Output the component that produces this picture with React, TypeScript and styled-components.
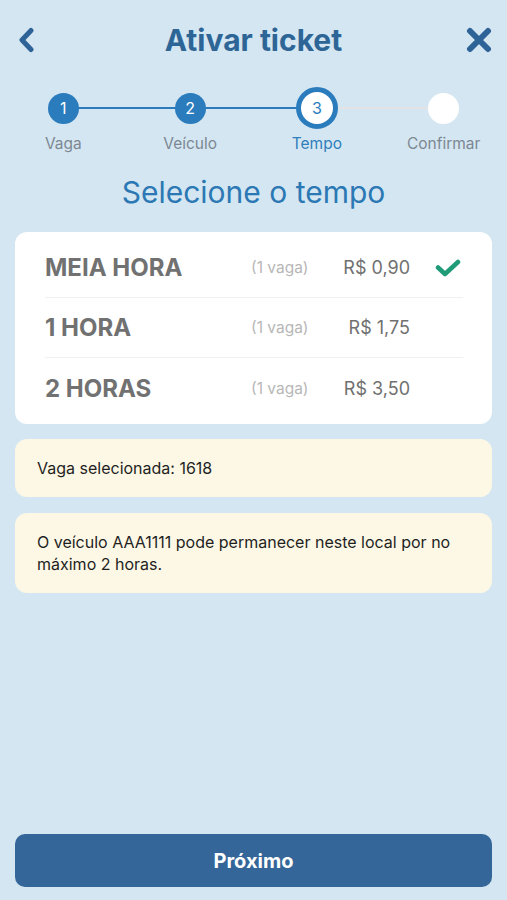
import React from "react"
import styled, {createGlobalStyle} from "styled-components"

const GlobalStyle = createGlobalStyle`
  html, body {
    margin: 0;
    padding: 0;
    background: #d4e6f1;
    font-family: Inter, "Noto Sans", "Liberation Sans", sans-serif;
  }
  * {
    box-sizing: border-box;
  }
`

const Screen = styled.div`
  min-height: 100vh;
  display: flex;
  flex-direction: column;
  padding: 0 15px 13px;
`

const Header = styled.div`
  height: 80px;
  display: flex;
  align-items: center;
  justify-content: space-between;
`

const IconButton = styled.button<{align: "start" | "end"}>`
  width: 40px;
  height: 40px;
  border: none;
  background: none;
  padding: 0;
  display: flex;
  align-items: center;
  justify-content: ${p => (p.align === "start" ? "flex-start" : "flex-end")};
  color: #2e6397;
`

const Title = styled.h1`
  flex: 1;
  margin: 0;
  text-align: center;
  font-size: 30px;
  font-weight: 700;
  color: #2d6597;
`

const Stepper = styled.div`
  display: grid;
  grid-template-columns: repeat(4, 1fr);
  margin: 7px -15px 0;
`

const Step = styled.div`
  display: flex;
  flex-direction: column;
  align-items: center;
`

const Track = styled.div<{left?: string; right?: string}>`
  position: relative;
  width: 100%;
  height: 42px;
  display: flex;
  align-items: center;
  justify-content: center;

  &::before,
  &::after {
    content: "";
    position: absolute;
    top: 20px;
    height: 2px;
  }
  &::before {
    left: 0;
    right: 50%;
    background: ${p => p.left || "transparent"};
  }
  &::after {
    left: 50%;
    right: 0;
    background: ${p => p.right || "transparent"};
  }
`

const Dot = styled.div<{state: "done" | "active" | "todo"}>`
  position: relative;
  z-index: 1;
  width: ${p => (p.state === "active" ? 42 : 31)}px;
  height: ${p => (p.state === "active" ? 42 : 31)}px;
  border-radius: 50%;
  display: flex;
  align-items: center;
  justify-content: center;
  font-size: 16px;
  background: ${p => (p.state === "done" ? "#2b7cbd" : "#ffffff")};
  border: ${p => (p.state === "active" ? "5px solid #2b7cbd" : "none")};
  color: ${p => (p.state === "done" ? "#ffffff" : "#2b7cbd")};
`

const StepLabel = styled.span<{active: boolean}>`
  margin-top: 6px;
  font-size: 15.5px;
  line-height: 18px;
  color: ${p => (p.active ? "#2f7fbd" : "#7c8893")};
`

const Subtitle = styled.h2`
  margin: 21px 0 22px;
  text-align: center;
  font-size: 30px;
  line-height: 36px;
  font-weight: 400;
  color: #2b78b4;
`

const Card = styled.div`
  background: #ffffff;
  border-radius: 12px;
  padding: 6px 29px 6px 30px;
`

const OptionRow = styled.div<{last?: boolean}>`
  height: 60px;
  display: grid;
  grid-template-columns: 206px auto 1fr 53px;
  align-items: center;
  border-bottom: ${p => (p.last ? "none" : "1px solid #f0f0f0")};
`

const OptionName = styled.span`
  font-size: 24px;
  font-weight: 700;
  color: #717171;
`

const OptionCount = styled.span`
  font-size: 15.5px;
  color: #b7b7b7;
`

const OptionPrice = styled.span`
  justify-self: end;
  font-size: 18px;
  color: #707070;
`

const Check = styled.div`
  justify-self: end;
  margin-right: 2px;
  display: flex;
`

const Notice = styled.div`
  margin-top: 15px;
  background: #fdf8e5;
  border-radius: 12px;
  padding: 18px 15px 18px 22px;
  font-size: 16px;
  line-height: 22px;
  color: #1f1f1f;

  & + & {
    margin-top: 16px;
  }
`

const NextButton = styled.button`
  margin-top: auto;
  height: 53px;
  border: none;
  border-radius: 10px;
  background: #346699;
  color: #ffffff;
  font-family: inherit;
  font-size: 20px;
  font-weight: 700;
`

const steps = ["Vaga", "Veículo", "Tempo", "Confirmar"]
const current = 3

const options = [
  {name: "MEIA HORA", price: "R$ 0,90", selected: true},
  {name: "1 HORA", price: "R$ 1,75", selected: false},
  {name: "2 HORAS", price: "R$ 3,50", selected: false}
]

const lineColor = (n: number) => (n <= current ? "#2b7cbd" : "#e3e3e3")

export default function App() {
  return (
    <>
      <GlobalStyle />
      <Screen>
        <Header>
          <IconButton align="start" aria-label="Voltar">
            <svg width="20" height="26" viewBox="0 0 20 26">
              <polyline
                points="16,3.5 7,13 16,22.5"
                fill="none"
                stroke="currentColor"
                strokeWidth="5"
                strokeLinecap="round"
                strokeLinejoin="round"
              />
            </svg>
          </IconButton>
          <Title>Ativar ticket</Title>
          <IconButton align="end" aria-label="Fechar">
            <svg width="26" height="26" viewBox="0 0 26 26">
              <path
                d="M4 4 L22 22 M22 4 L4 22"
                fill="none"
                stroke="currentColor"
                strokeWidth="6"
                strokeLinecap="round"
              />
            </svg>
          </IconButton>
        </Header>

        <Stepper>
          {steps.map((label, i) => {
            const n = i + 1
            const state = n < current ? "done" : n === current ? "active" : "todo"
            return (
              <Step key={label}>
                <Track
                  left={i > 0 ? lineColor(n) : undefined}
                  right={i < steps.length - 1 ? lineColor(n + 1) : undefined}
                >
                  <Dot state={state}>{state === "todo" ? "" : n}</Dot>
                </Track>
                <StepLabel active={n === current}>{label}</StepLabel>
              </Step>
            )
          })}
        </Stepper>

        <Subtitle>Selecione o tempo</Subtitle>

        <Card>
          {options.map((o, i) => (
            <OptionRow key={o.name} last={i === options.length - 1}>
              <OptionName>{o.name}</OptionName>
              <OptionCount>(1 vaga)</OptionCount>
              <OptionPrice>{o.price}</OptionPrice>
              <Check>
                {o.selected && (
                  <svg width="26" height="18" viewBox="0 0 26 18">
                    <polyline
                      points="3,8.5 10,15 23,3"
                      fill="none"
                      stroke="#1f9b78"
                      strokeWidth="4.5"
                      strokeLinecap="round"
                      strokeLinejoin="round"
                    />
                  </svg>
                )}
              </Check>
            </OptionRow>
          ))}
        </Card>

        <Notice>Vaga selecionada: 1618</Notice>
        <Notice>O veículo AAA1111 pode permanecer neste local por no máximo 2 horas.</Notice>

        <NextButton>Próximo</NextButton>
      </Screen>
    </>
  )
}
